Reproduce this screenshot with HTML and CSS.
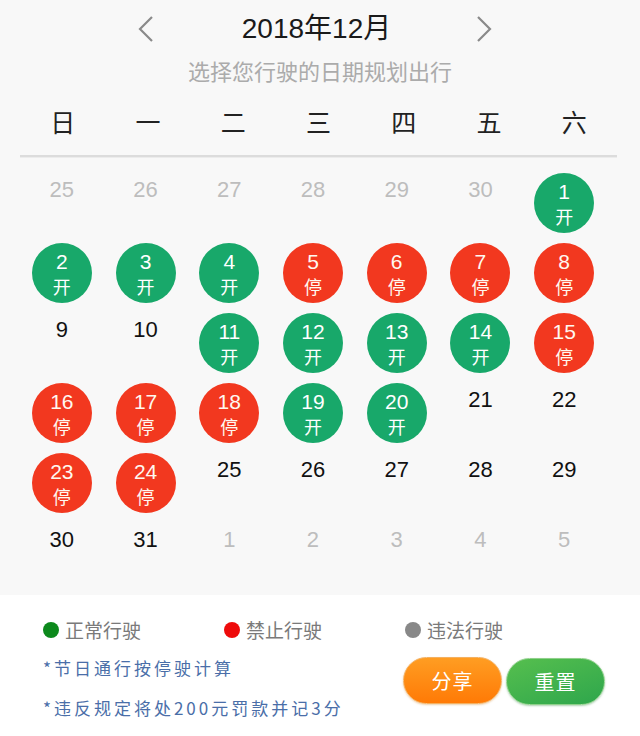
FILE: index.html
```html
<!DOCTYPE html>
<html lang="zh-CN">
<head>
<meta charset="utf-8">
<title>2018年12月</title>
<link rel="stylesheet" href="styles.css">
</head>
<body>
<div class="top">
  <div class="nav">
    <svg class="arrow" width="17" height="28" viewBox="0 0 17 28"><path d="M15 2 L3 14 L15 26" fill="none" stroke="#8a8a8a" stroke-width="2.2"/></svg>
    <div class="title">2018年12月</div>
    <svg class="arrow" width="17" height="28" viewBox="0 0 17 28"><path d="M2 2 L14 14 L2 26" fill="none" stroke="#8a8a8a" stroke-width="2.2"/></svg>
  </div>
  <div class="sub">选择您行驶的日期规划出行</div>
  <div class="weekdays">
    <span>日</span><span>一</span><span>二</span><span>三</span><span>四</span><span>五</span><span>六</span>
  </div>
  <div class="rule"></div>
  <div class="grid">
    <div class="cell"><div class="day other"><span class="num">25</span></div></div>
    <div class="cell"><div class="day other"><span class="num">26</span></div></div>
    <div class="cell"><div class="day other"><span class="num">27</span></div></div>
    <div class="cell"><div class="day other"><span class="num">28</span></div></div>
    <div class="cell"><div class="day other"><span class="num">29</span></div></div>
    <div class="cell"><div class="day other"><span class="num">30</span></div></div>
    <div class="cell"><div class="day go"><span class="num">1</span><span class="tag">开</span></div></div>

    <div class="cell"><div class="day go"><span class="num">2</span><span class="tag">开</span></div></div>
    <div class="cell"><div class="day go"><span class="num">3</span><span class="tag">开</span></div></div>
    <div class="cell"><div class="day go"><span class="num">4</span><span class="tag">开</span></div></div>
    <div class="cell"><div class="day stop"><span class="num">5</span><span class="tag">停</span></div></div>
    <div class="cell"><div class="day stop"><span class="num">6</span><span class="tag">停</span></div></div>
    <div class="cell"><div class="day stop"><span class="num">7</span><span class="tag">停</span></div></div>
    <div class="cell"><div class="day stop"><span class="num">8</span><span class="tag">停</span></div></div>

    <div class="cell"><div class="day"><span class="num">9</span></div></div>
    <div class="cell"><div class="day"><span class="num">10</span></div></div>
    <div class="cell"><div class="day go"><span class="num">11</span><span class="tag">开</span></div></div>
    <div class="cell"><div class="day go"><span class="num">12</span><span class="tag">开</span></div></div>
    <div class="cell"><div class="day go"><span class="num">13</span><span class="tag">开</span></div></div>
    <div class="cell"><div class="day go"><span class="num">14</span><span class="tag">开</span></div></div>
    <div class="cell"><div class="day stop"><span class="num">15</span><span class="tag">停</span></div></div>

    <div class="cell"><div class="day stop"><span class="num">16</span><span class="tag">停</span></div></div>
    <div class="cell"><div class="day stop"><span class="num">17</span><span class="tag">停</span></div></div>
    <div class="cell"><div class="day stop"><span class="num">18</span><span class="tag">停</span></div></div>
    <div class="cell"><div class="day go"><span class="num">19</span><span class="tag">开</span></div></div>
    <div class="cell"><div class="day go"><span class="num">20</span><span class="tag">开</span></div></div>
    <div class="cell"><div class="day"><span class="num">21</span></div></div>
    <div class="cell"><div class="day"><span class="num">22</span></div></div>

    <div class="cell"><div class="day stop"><span class="num">23</span><span class="tag">停</span></div></div>
    <div class="cell"><div class="day stop"><span class="num">24</span><span class="tag">停</span></div></div>
    <div class="cell"><div class="day"><span class="num">25</span></div></div>
    <div class="cell"><div class="day"><span class="num">26</span></div></div>
    <div class="cell"><div class="day"><span class="num">27</span></div></div>
    <div class="cell"><div class="day"><span class="num">28</span></div></div>
    <div class="cell"><div class="day"><span class="num">29</span></div></div>

    <div class="cell"><div class="day"><span class="num">30</span></div></div>
    <div class="cell"><div class="day"><span class="num">31</span></div></div>
    <div class="cell"><div class="day other"><span class="num">1</span></div></div>
    <div class="cell"><div class="day other"><span class="num">2</span></div></div>
    <div class="cell"><div class="day other"><span class="num">3</span></div></div>
    <div class="cell"><div class="day other"><span class="num">4</span></div></div>
    <div class="cell"><div class="day other"><span class="num">5</span></div></div>
  </div>
</div>
<div class="bottom">
  <div class="legend">
    <div class="legend-item"><span class="dot dot-green"></span>正常行驶</div>
    <div class="legend-item"><span class="dot dot-red"></span>禁止行驶</div>
    <div class="legend-item"><span class="dot dot-gray"></span>违法行驶</div>
  </div>
  <div class="bottom-row">
    <div class="notes">
      <div class="note">*节日通行按停驶计算</div>
      <div class="note">*违反规定将处200元罚款并记3分</div>
    </div>
    <div class="buttons">
      <div class="btn btn-share">分享</div>
      <div class="btn btn-reset">重置</div>
    </div>
  </div>
</div>
</body>
</html>
```
FILE: styles.css
```css
html, body {
  margin: 0;
  padding: 0;
  background: #ffffff;
}
body {
  width: 640px;
  height: 736px;
  overflow: hidden;
  font-family: "Liberation Sans", "Noto Sans CJK SC", sans-serif;
}
.top {
  background: #f8f8f8;
  height: 595px;
  box-sizing: border-box;
  padding-top: 10px;
}
.nav {
  display: flex;
  justify-content: center;
  align-items: center;
  height: 37px;
  padding-right: 10px;
}
.arrow {
  display: block;
}
.title {
  font-size: 28px;
  line-height: 37px;
  color: #1a1a1a;
  margin: 0 85px 0 88px;
  font-family: "Liberation Sans", "Noto Sans CJK SC", sans-serif;
}
.sub {
  margin-top: 8px;
  text-align: center;
  font-size: 22px;
  line-height: 30px;
  color: #ababab;
  font-family: "Noto Sans CJK SC", sans-serif;
}
.weekdays {
  margin: 19px 23px 0 20px;
  display: grid;
  grid-template-columns: repeat(7, 1fr);
  font-size: 25px;
  line-height: 34px;
  color: #222;
  text-align: center;
  font-family: "Noto Sans CJK SC", sans-serif;
}
.rule {
  margin: 17px 23px 0 20px;
  height: 2px;
  background: #dcdcdc;
  border-bottom: 1px solid #ececec;
}
.grid {
  margin: 15px 0 0 20px;
  width: 586px;
  display: grid;
  grid-template-columns: repeat(7, 1fr);
  grid-auto-rows: 60px;
  row-gap: 10px;
}
.cell {
  display: flex;
  justify-content: center;
}
.day {
  width: 60px;
  height: 60px;
  border-radius: 50%;
  display: flex;
  flex-direction: column;
  align-items: center;
  box-sizing: border-box;
  padding-top: 6px;
  color: #111;
}
.num {
  font-size: 22px;
  line-height: 22px;
}
.day.go .num, .day.stop .num {
  font-size: 21px;
  padding-top: 2px;
}
.tag {
  font-family: "Noto Sans CJK SC", sans-serif;
  font-size: 18px;
  line-height: 20px;
  margin-top: 3px;
}
.day.other {
  color: #bdbdbd;
}
.day.go {
  background: #18a86a;
  color: #ffffff;
}
.day.stop {
  background: #f2381f;
  color: #fff8f0;
}
.bottom {
  padding: 23px 35px 0 43px;
  font-family: "Noto Sans CJK SC", sans-serif;
}
.legend {
  display: flex;
}
.legend-item {
  width: 181px;
  display: flex;
  align-items: center;
  font-size: 19px;
  line-height: 24px;
  color: #7a7a7a;
  height: 24px;
}
.dot {
  width: 16px;
  height: 16px;
  border-radius: 50%;
  margin-right: 6px;
  flex: none;
}
.dot-green { background: #0c891c; }
.dot-red { background: #ee0b0b; }
.dot-gray { background: #888888; }
.bottom-row {
  display: flex;
  justify-content: space-between;
  margin-top: 14px;
}
.notes {
  display: flex;
  flex-direction: column;
  gap: 16px;
}
.note {
  font-size: 17px;
  line-height: 24px;
  letter-spacing: 3px;
  color: #4a6ea8;
}
.buttons {
  display: flex;
  gap: 4px;
  padding-top: 1px;
}
.btn {
  width: 99px;
  height: 47px;
  border-radius: 24px;
  box-sizing: border-box;
  color: #ffffff;
  font-size: 20px;
  display: flex;
  align-items: center;
  justify-content: center;
  letter-spacing: 1px;
}
.btn-share {
  background: linear-gradient(180deg, #ff9d22 0%, #ff7a06 100%);
  border: 1px solid #f4b060;
  box-shadow: 0 1px 2px rgba(200, 120, 20, 0.35);
}
.btn-reset {
  background: linear-gradient(160deg, #56bf4e 0%, #2ea64c 100%);
  border: 1px solid #8fd08a;
  box-shadow: 0 1px 2px rgba(30, 120, 40, 0.35);
  margin-top: 1px;
}
```
